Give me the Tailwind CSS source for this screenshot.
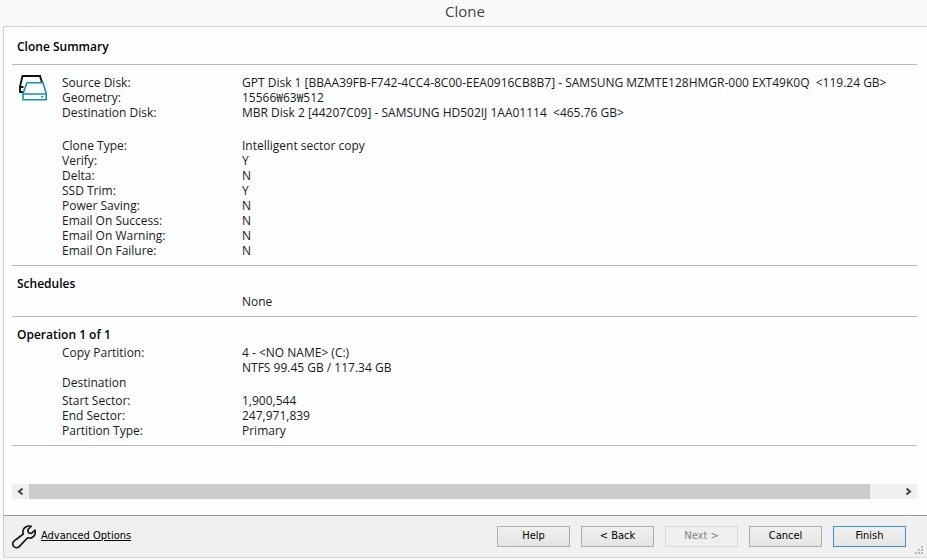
<!DOCTYPE html>
<html lang="en">
<head>
  <meta charset="utf-8"/>
  <meta content="width=device-width, initial-scale=1" name="viewport"/>
  <title>Clone</title>
  <script src="https://cdn.jsdelivr.net/npm/@tailwindcss/browser@4"></script>
</head>
<body class="bg-[#fafafa] text-[#1a1a1a] font-['Open_Sans','Noto_Sans_CJK_KR',sans-serif] text-xs min-h-screen flex flex-col pl-[3px] pb-0.5">

  <!-- Title bar -->
  <header class="h-[26px] text-center">
    <h1 class="text-[15px] leading-[23px] text-[#444]">Clone</h1>
  </header>

  <!-- Summary -->
  <main class="flex-1 flex flex-col bg-[#fdfeff] border-t border-l border-[#cfcfcf] pl-2 pr-2.5 pb-4">
    <section class="pt-2.5">
      <h2 class="font-semibold text-black leading-5 px-[5px] pb-[7px] border-b border-[#b8b8b8]">Clone Summary</h2>
      <div class="flex pt-2.5 pb-[7px] border-b border-[#b8b8b8]">
        <div class="w-[50px] pl-[6px] shrink-0">
          <svg class="w-[30px] h-[27px]" viewBox="0 0 30 27" fill="none" stroke-width="1.6" aria-hidden="true">
            <path stroke="#111" stroke-width="1.9" d="M5 17H2V11.500L4.500 1h17.500L24 7.500M2 12h3.500"/>
            <path stroke="#1a8fae" fill="#fdfeff" d="M9 7.800h16l3.200 10.700v6.300H5V18.500z"/>
            <path stroke="#1a8fae" d="M5 19h23M23.200 21.800h2"/>
          </svg>
        </div>
        <div class="leading-[15px] whitespace-nowrap">
          <dl class="grid grid-cols-[180px_1fr]">
            <dt>Source Disk:</dt><dd class="whitespace-pre">GPT Disk 1 [BBAA39FB-F742-4CC4-8C00-EEA0916CB8B7] - SAMSUNG MZMTE128HMGR-000 EXT49K0Q  &lt;119.24 GB&gt;</dd>
            <dt>Geometry:</dt><dd>15566₩63₩512</dd>
            <dt>Destination Disk:</dt><dd class="whitespace-pre">MBR Disk 2 [44207C09] - SAMSUNG HD502IJ 1AA01114  &lt;465.76 GB&gt;</dd>
          </dl>
          <dl class="grid grid-cols-[180px_1fr] mt-[18px]">
            <dt>Clone Type:</dt><dd>Intelligent sector copy</dd>
            <dt>Verify:</dt><dd>Y</dd>
            <dt>Delta:</dt><dd>N</dd>
            <dt>SSD Trim:</dt><dd>Y</dd>
            <dt>Power Saving:</dt><dd>N</dd>
            <dt>Email On Success:</dt><dd>N</dd>
            <dt>Email On Warning:</dt><dd>N</dd>
            <dt>Email On Failure:</dt><dd>N</dd>
          </dl>
        </div>
      </div>
    </section>

    <section class="pt-2 pb-[7px] border-b border-[#b8b8b8]">
      <h2 class="font-semibold text-black leading-5 px-[5px]">Schedules</h2>
      <p class="pl-[230px] leading-[15px]">None</p>
    </section>

    <section class="pt-2 pb-[7px] border-b border-[#b8b8b8]">
      <h2 class="font-semibold text-black leading-5 px-[5px]">Operation 1 of 1</h2>
      <div class="pl-[50px] leading-[15px]">
        <dl class="grid grid-cols-[180px_1fr]">
          <dt>Copy Partition:</dt><dd>4 - &lt;NO NAME&gt; (C:)<br/>NTFS 99.45 GB / 117.34 GB</dd>
          <dt>Destination</dt><dd></dd>
        </dl>
        <dl class="grid grid-cols-[180px_1fr] mt-[3px]">
          <dt>Start Sector:</dt><dd>1,900,544</dd>
          <dt>End Sector:</dt><dd>247,971,839</dd>
          <dt>Partition Type:</dt><dd>Primary</dd>
        </dl>
      </div>
    </section>

    <!-- Horizontal scrollbar -->
    <div class="mt-auto flex h-[15px] bg-[#f0f0f0]">
      <button type="button" aria-label="Scroll left" class="w-[17px] flex items-center justify-center">
        <svg class="w-[7px] h-[7px]" viewBox="0 0 7 7" fill="none" stroke="#444" stroke-width="2" aria-hidden="true"><path d="M5.5 .5l-3.5 3 3.5 3"/></svg>
      </button>
      <div class="flex-1">
        <div class="w-[96.5%] h-full bg-[#cbcbcb]"></div>
      </div>
      <button type="button" aria-label="Scroll right" class="w-[17px] flex items-center justify-center">
        <svg class="w-[7px] h-[7px]" viewBox="0 0 7 7" fill="none" stroke="#444" stroke-width="2" aria-hidden="true"><path d="M1.5 .5l3.5 3-3.5 3"/></svg>
      </button>
    </div>
  </main>

  <!-- Footer -->
  <footer class="relative h-[43px] bg-[#f0f0f0] border-t border-t-[#999] border-l border-l-[#cfcfcf] border-b border-b-[#d8d8d8] flex items-center justify-between pl-2 pr-[21px] font-['DejaVu_Sans_Condensed','DejaVu_Sans',sans-serif] text-[11px] text-black">
    <a href="#" class="flex items-center gap-[5px]">
      <svg class="w-6 h-6" viewBox="0 0 24 24" fill="none" stroke="#111" stroke-width="1.6" stroke-linejoin="round" aria-hidden="true">
        <path d="M19.2 1.300C15.500.2 11.800 2.200 11 5.600c-.2 1.200-.1 2.300.3 3.400L1.900 16.200C.4 17.700.5 20 1.800 21.500c1.400 1.500 3.900 1.700 5.400.1l8.400-8.800c3.300.7 6.200-.6 7.300-3.400.5-1.400.6-2.800.1-4.300l-3.600 3.400-2.900-.8-.7-2.900z"/>
      </svg>
      <span class="underline">Advanced Options</span>
    </a>
    <div class="flex gap-[11px]">
      <button type="button" class="w-[73px] h-[21px] border border-[#adadad] bg-linear-to-b from-[#f0f0f0] to-[#e4e4e4]">Help</button>
      <button type="button" class="w-[73px] h-[21px] border border-[#adadad] bg-linear-to-b from-[#f0f0f0] to-[#e4e4e4]">&lt; Back</button>
      <button type="button" disabled class="w-[73px] h-[21px] border border-[#d9d9d9] bg-[#efefef] text-[#838383]">Next &gt;</button>
      <button type="button" class="w-[73px] h-[21px] border border-[#adadad] bg-linear-to-b from-[#f0f0f0] to-[#e4e4e4]">Cancel</button>
      <button type="button" class="w-[73px] h-[21px] border border-[#3c8fd9] bg-linear-to-b from-[#f0f0f0] to-[#e4e4e4]">Finish</button>
    </div>
    <!-- Resize grip -->
    <svg class="absolute right-1 bottom-[3px] w-2 h-2" viewBox="0 0 8 8" fill="#bbb" aria-hidden="true">
      <path d="M6 0h2v2H6zM3 3h2v2H3zM6 3h2v2H6zM0 6h2v2H0zM3 6h2v2H3zM6 6h2v2H6z"/>
    </svg>
  </footer>

</body>
</html>
